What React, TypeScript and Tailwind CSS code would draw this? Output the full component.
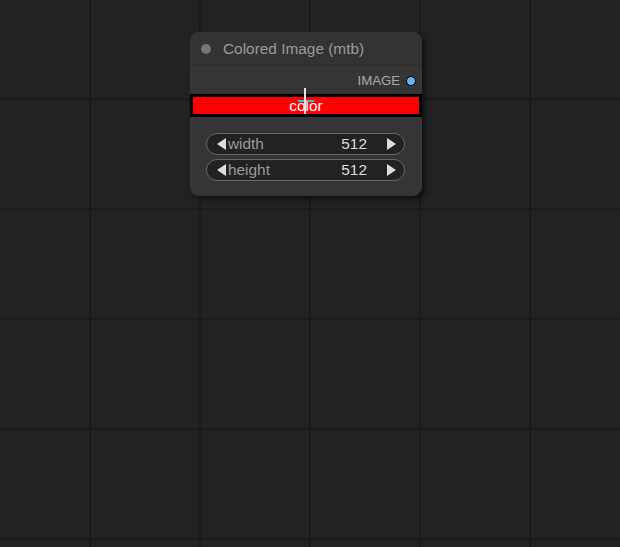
const Arrow = ({ dir }: { dir: "left" | "right" }) => (
  <svg width="11" height="14" viewBox="0 0 11 14" className="shrink-0">
    {dir === "left" ? (
      <polygon points="10,1 10,13 1,7" fill="#dddddd" />
    ) : (
      <polygon points="1,1 1,13 10,7" fill="#dddddd" />
    )}
  </svg>
)

const NumberWidget = ({ label, value }: { label: string; value: number }) => (
  <div className="flex h-[22px] items-center rounded-full border border-[#666] bg-[#222] pl-[9px] pr-[7px] text-[15.4px] leading-none">
    <Arrow dir="left" />
    <span className="ml-[1px] text-[#999]">{label}</span>
    <span className="ml-auto mr-[19px] text-[#ddd]">{value}</span>
    <Arrow dir="right" />
  </div>
)

const App = () => {
  return (
    <main
      className="relative h-[547px] w-[620px] overflow-hidden bg-[#222222] bg-[linear-gradient(to_right,#1b1b1b_2px,transparent_2px),linear-gradient(to_bottom,#1b1b1b_2px,transparent_2px)] bg-[size:110px_110px] bg-[position:89px_98px]"
      style={{ fontFamily: '"Liberation Sans", Arial, sans-serif' }}
    >
      <div className="absolute left-[190px] top-[32px] flex h-[164px] w-[232px] flex-col rounded-[9px] bg-[#353535] shadow-[3px_3px_5px_rgba(0,0,0,0.55)]">
        {/* title */}
        <div className="flex h-[34px] items-center rounded-t-[9px] border-b border-[#2b2b2b] bg-[#333] pl-[11px]">
          <div className="h-[10px] w-[10px] rounded-full bg-[#777]" />
          <span className="ml-[12px] text-[15.4px] text-[#999]">Colored Image (mtb)</span>
        </div>

        {/* output slot */}
        <div className="flex h-[28px] items-center justify-end pr-[6px] pt-[1px]">
          <span className="text-[13.2px] text-[#aaa]">IMAGE</span>
          <div className="ml-[6px] h-[10px] w-[10px] rounded-full border border-black bg-[#64b5f6]" />
        </div>

        {/* color widget */}
        <div className="relative h-[23px] bg-black p-[3px]">
          <div className="flex h-full items-center justify-center bg-[#ff0000] text-[15.4px] leading-none text-white">
            color
          </div>
          <div className="absolute left-[114px] top-[-6px] h-[26px] w-[2px] bg-[#e5e5e5]" />
          <div className="absolute left-[108px] top-[6px] h-[2px] w-[6px] bg-[#3cc]" />
          <div className="absolute left-[117px] top-[6px] h-[2px] w-[7px] bg-[#3cc]" />
        </div>

        {/* number widgets */}
        <div className="mt-[16px] flex flex-col gap-[4px] pl-[16px] pr-[17px]">
          <NumberWidget label="width" value={512} />
          <NumberWidget label="height" value={512} />
        </div>
      </div>
    </main>
  )
}

export default App
